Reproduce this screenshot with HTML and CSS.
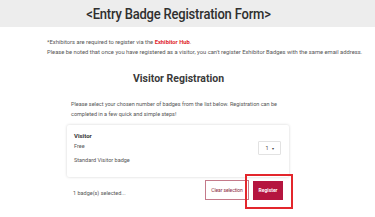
FILE: index.html
```html
<!DOCTYPE html>
<html>
<head>
<meta charset="utf-8">
<link rel="stylesheet" href="styles.css">
</head>
<body>
<header class="topbar"><h1 class="title">&lt;Entry Badge Registration Form&gt;</h1></header>
<div class="notes">
  <p class="note">*Exhibitors are required to register via the <a class="hub">Exhibitor Hub</a>.</p>
  <p class="note">Please be noted that once you have registered as a visitor, you can't register Exhibitor Badges with the same email address.</p>
</div>
<h2 class="section">Visitor Registration</h2>
<div class="form">
  <p class="intro">Please select your chosen number of badges from the list below. Registration can be completed in a few quick and simple steps!</p>
  <div class="card">
    <div class="info">
      <div class="name">Visitor</div>
      <div class="price">Free</div>
      <div class="desc">Standard Visitor badge</div>
    </div>
    <div class="qty"><span>1</span><span class="caret">&#9662;</span></div>
  </div>
  <div class="actions">
    <span class="count">1 badge(s) selected...</span>
    <div class="buttons">
      <button class="btn clear">Clear selection</button>
      <button class="btn register">Register</button>
      <span class="highlight"></span>
    </div>
  </div>
</div>
</body>
</html>
```
FILE: styles.css
```css
* { box-sizing: border-box; }
body {
  margin: 0;
  font-family: Roboto, "Liberation Sans", sans-serif;
  background: #fff;
  color: #444;
  width: 375px;
  height: 217px;
  overflow: hidden;
}
.topbar {
  height: 27px;
  background: #ededed;
  display: flex;
  align-items: center;
  justify-content: center;
  padding-right: 18px;
}
.title {
  margin: 0;
  font-size: 13px;
  font-weight: 500;
  color: #2f2f2f;
  letter-spacing: -0.2px;
  transform: scaleY(1.12);
}
.notes {
  margin: 12px 0 0 47px;
}
.note {
  margin: 0 0 4px 0;
  font-size: 5.8px;
  line-height: 6px;
  color: #555;
}
.hub {
  color: #e0262d;
  font-weight: 700;
}
.section {
  margin: 17px 0 0 0;
  text-align: center;
  padding-right: 18px;
  font-size: 10.5px;
  font-weight: 700;
  color: #3a3a3a;
  transform: scaleY(1.1);
}
.form {
  width: 222px;
  margin: 14px 0 0 67px;
}
.intro {
  margin: 0 0 6px 4px;
  font-size: 5.5px;
  line-height: 10px;
  color: #555;
  width: 206px;
}
.card {
  background: #fff;
  box-shadow: 0 0 3px rgba(0,0,0,0.18);
  border-radius: 2px;
  height: 52px;
  padding: 7px 8px 0 7px;
  display: flex;
  justify-content: space-between;
}
.name {
  font-size: 6px;
  font-weight: 700;
  color: #333;
  line-height: 8px;
}
.price {
  font-size: 5.5px;
  color: #555;
  line-height: 8px;
  margin-top: 2px;
}
.desc {
  font-size: 5.5px;
  color: #555;
  line-height: 8px;
  margin-top: 6px;
}
.qty {
  margin-top: 9px;
  width: 23px;
  height: 14px;
  border: 1px solid #e2e2e2;
  border-radius: 1px;
  display: flex;
  align-items: center;
  justify-content: center;
  gap: 3px;
  font-size: 5.5px;
  color: #444;
}
.caret { font-size: 4px; }
.actions {
  display: flex;
  justify-content: space-between;
  align-items: center;
  padding: 0 6px 0 6px;
  margin-top: 0;
}
.count {
  font-size: 5.5px;
  color: #555;
  margin-top: 6px;
}
.buttons {
  position: relative;
  display: flex;
  align-items: center;
  gap: 4px;
  padding: 3px 0;
}
.btn {
  font-family: Roboto, "Liberation Sans", sans-serif;
  font-size: 5px;
  border-radius: 0;
  cursor: pointer;
}
.clear {
  height: 20px;
  width: 44px;
  padding: 0;
  background: #fff;
  border: 1px solid #c47a8a;
  color: #8c2a3e;
  letter-spacing: -0.1px;
}
.register {
  height: 19px;
  width: 30px;
  padding: 0;
  background: #b5153f;
  border: none;
  color: #fff;
  font-weight: 700;
}
.highlight {
  position: absolute;
  left: 40px;
  top: -3px;
  width: 48px;
  height: 35px;
  border: 2px solid #e3262c;
  pointer-events: none;
}
```
